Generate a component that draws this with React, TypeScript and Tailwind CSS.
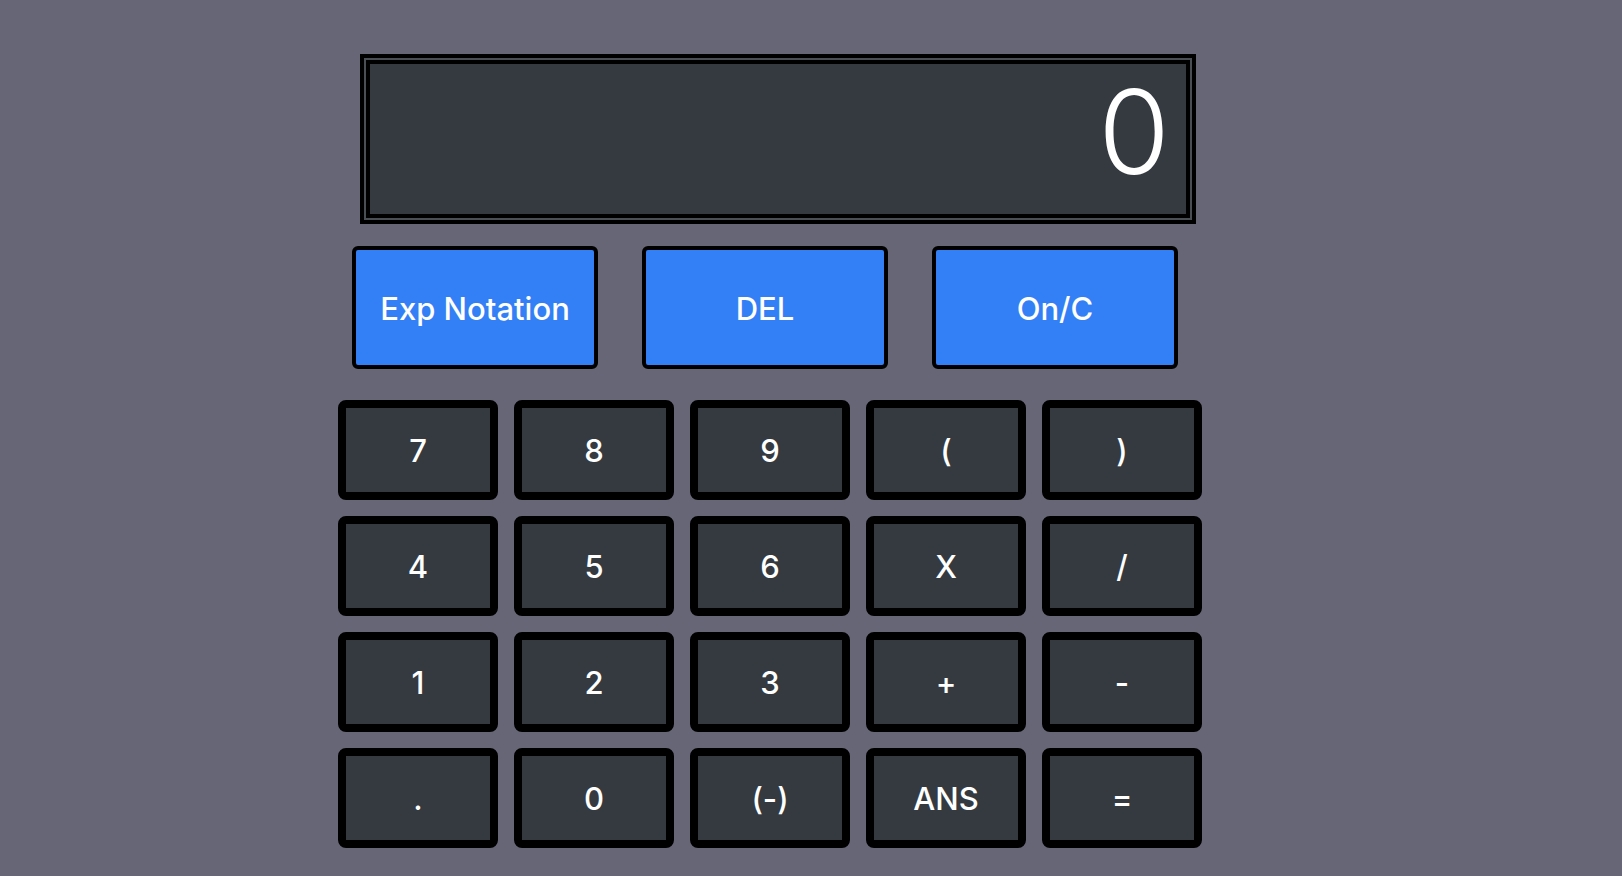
import React, { useState } from "react";

const keys = [
  "7", "8", "9", "(", ")",
  "4", "5", "6", "X", "/",
  "1", "2", "3", "+", "-",
  ".", "0", "(-)", "ANS", "=",
];

export default function App() {
  const [display, setDisplay] = useState("0");

  const press = (k: string) => {
    if (k === "=") return;
    setDisplay((d) => (d === "0" ? k : d + k));
  };

  return (
    <div
      className="min-h-screen w-full bg-[#676677] pt-[54px] text-white"
      style={{ fontFamily: "Inter, 'Noto Sans', sans-serif" }}
    >
      {/* DISPLAY */}
      <div className="ml-[360px] w-[836px] h-[170px] border-4 border-black bg-[#494f55]">
        <div className="m-[2px] h-[calc(100%-4px)] border-4 border-black bg-[#343a40] flex items-center justify-end pr-[16px] pb-[14px]">
          <span className="text-[116px] font-light leading-none">{display}</span>
        </div>
      </div>

      {/* TOP BUTTONS */}
      <div className="ml-[352px] mt-[22px] flex gap-[44px]">
        <button className="w-[246px] h-[123px] rounded-md border-4 border-black bg-[#337ff6] text-[31px] font-medium pt-[3px]">
          Exp Notation
        </button>
        <button
          onClick={() => setDisplay((d) => (d.length > 1 ? d.slice(0, -1) : "0"))}
          className="w-[246px] h-[123px] rounded-md border-4 border-black bg-[#337ff6] text-[31px] font-medium pt-[3px]"
        >
          DEL
        </button>
        <button
          onClick={() => setDisplay("0")}
          className="w-[246px] h-[123px] rounded-md border-4 border-black bg-[#337ff6] text-[31px] font-medium pt-[3px]"
        >
          On/C
        </button>
      </div>

      {/* KEYPAD */}
      <div className="ml-[338px] mt-[31px] grid grid-cols-[repeat(5,160px)] gap-x-[16px] gap-y-[16px]">
        {keys.map((k) => (
          <button
            key={k}
            onClick={() => press(k)}
            className="h-[100px] rounded-lg border-8 border-black bg-[#343a40] text-[31px] font-medium pt-[3px]"
          >
            {k}
          </button>
        ))}
      </div>
    </div>
  );
}
